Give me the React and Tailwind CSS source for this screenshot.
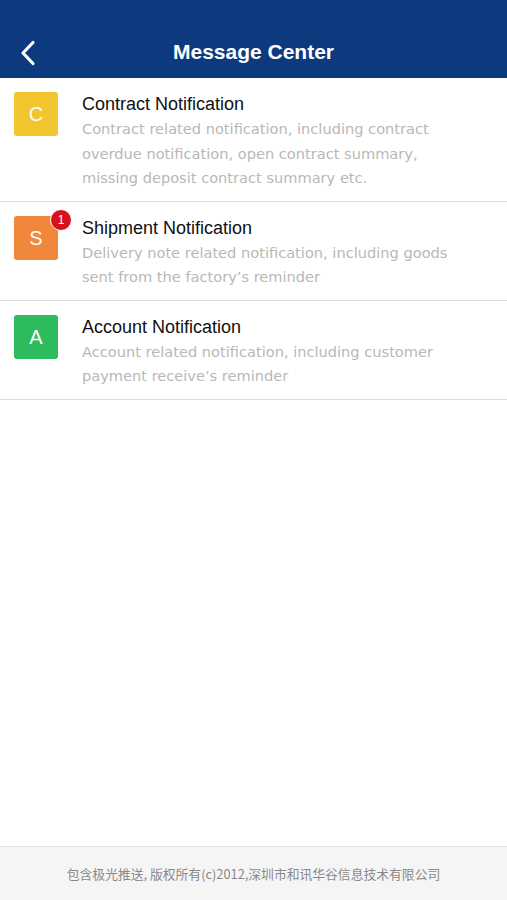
import React from "react";

const items = [
  {
    letter: "C",
    color: "bg-[#f0c52d]",
    title: "Contract Notification",
    lines: [
      "Contract related notification, including contract",
      "overdue notification, open contract summary,",
      "missing deposit contract summary etc.",
    ],
  },
  {
    letter: "S",
    color: "bg-[#f0873a]",
    title: "Shipment Notification",
    badge: "1",
    lines: [
      "Delivery note related notification, including goods",
      "sent from the factory\u2019s reminder",
    ],
  },
  {
    letter: "A",
    color: "bg-[#2dbb5d]",
    title: "Account Notification",
    lines: [
      "Account related notification, including customer",
      "payment receive\u2019s reminder",
    ],
  },
];

export default function App() {
  return (
    <div className="min-h-[900px] w-[507px] flex flex-col bg-white font-['Liberation_Sans',sans-serif]">
      <div className="bg-[#0d3a7e] pt-[30px] pb-[4px]">
        <div className="relative h-[44px] flex items-center justify-center">
          <svg
            className="absolute left-[19px] top-[10px]"
            width="18"
            height="26"
            viewBox="0 0 18 26"
            fill="none"
          >
            <path
              d="M14 2.5 L4 13 L14 23.5"
              stroke="white"
              strokeWidth="3.2"
              strokeLinecap="round"
              strokeLinejoin="round"
            />
          </svg>
          <span className="text-white text-[21px] font-bold">Message Center</span>
        </div>
      </div>

      <div>
        {items.map((it) => (
          <div
            key={it.letter}
            className="flex pl-[14px] pt-[14px] pb-[10px] border-b border-[#dcdcdc]"
          >
            <div className="relative shrink-0">
              <div
                className={`w-[44px] h-[44px] rounded-[3px] ${it.color} flex items-center justify-center text-white text-[20px]`}
              >
                {it.letter}
              </div>
              {it.badge && (
                <div className="absolute left-[36px] top-[-7px] w-[22px] h-[22px] rounded-full bg-[#d9101d] border border-white flex items-center justify-center text-white text-[12px]">
                  {it.badge}
                </div>
              )}
            </div>
            <div className="ml-[24px] pt-[1px]">
              <div className="text-[18px] leading-[22px] text-[#111]">{it.title}</div>
              <div className="mt-[2px] font-['DejaVu_Sans',sans-serif] text-[14.6px] leading-[24.5px] text-[#b8b8b8]">
                {it.lines.map((l, i) => (
                  <div key={i} className="whitespace-nowrap">{l}</div>
                ))}
              </div>
            </div>
          </div>
        ))}
      </div>

      <div className="flex-1" />

      <div className="h-[54px] bg-[#f5f5f5] border-t border-[#e4e4e4] flex items-center justify-center text-[12.8px] text-[#888] font-['Noto_Sans_CJK_SC',sans-serif]">
        包含极光推送, 版权所有(c)2012,深圳市和讯华谷信息技术有限公司
      </div>
    </div>
  );
}
